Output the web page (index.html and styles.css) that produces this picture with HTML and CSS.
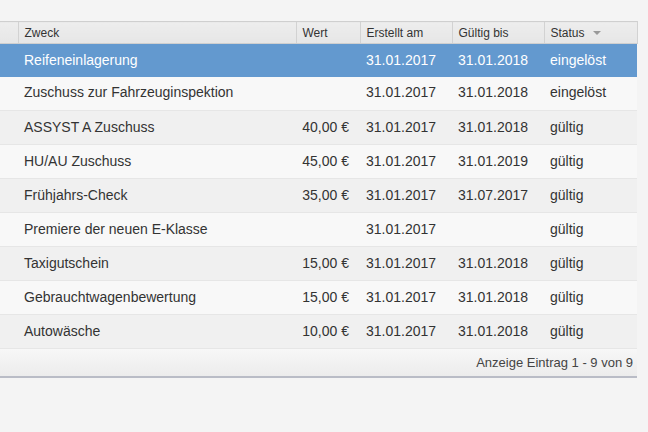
FILE: index.html
```html
<!DOCTYPE html>
<html lang="de">
<head>
<meta charset="utf-8">
<link rel="stylesheet" href="styles.css">
</head>
<body>
<div class="grid">
  <table class="tbl">
    <colgroup>
      <col class="c0"><col class="c1"><col class="c2"><col class="c3"><col class="c4"><col class="c5">
    </colgroup>
    <thead>
      <tr>
        <th></th>
        <th>Zweck</th>
        <th>Wert</th>
        <th>Erstellt am</th>
        <th>Gültig bis</th>
        <th>Status <span class="sort"></span></th>
      </tr>
    </thead>
    <tbody>
      <tr class="sel"><td></td><td>Reifeneinlagerung</td><td class="num"></td><td>31.01.2017</td><td>31.01.2018</td><td>eingelöst</td></tr>
      <tr><td></td><td>Zuschuss zur Fahrzeuginspektion</td><td class="num"></td><td>31.01.2017</td><td>31.01.2018</td><td>eingelöst</td></tr>
      <tr><td></td><td>ASSYST A Zuschuss</td><td class="num">40,00 €</td><td>31.01.2017</td><td>31.01.2018</td><td>gültig</td></tr>
      <tr><td></td><td>HU/AU Zuschuss</td><td class="num">45,00 €</td><td>31.01.2017</td><td>31.01.2019</td><td>gültig</td></tr>
      <tr><td></td><td>Frühjahrs-Check</td><td class="num">35,00 €</td><td>31.01.2017</td><td>31.07.2017</td><td>gültig</td></tr>
      <tr><td></td><td>Premiere der neuen E-Klasse</td><td class="num"></td><td>31.01.2017</td><td></td><td>gültig</td></tr>
      <tr><td></td><td>Taxigutschein</td><td class="num">15,00 €</td><td>31.01.2017</td><td>31.01.2018</td><td>gültig</td></tr>
      <tr><td></td><td>Gebrauchtwagenbewertung</td><td class="num">15,00 €</td><td>31.01.2017</td><td>31.01.2018</td><td>gültig</td></tr>
      <tr><td></td><td>Autowäsche</td><td class="num">10,00 €</td><td>31.01.2017</td><td>31.01.2018</td><td>gültig</td></tr>
    </tbody>
  </table>
  <div class="footer">Anzeige Eintrag 1 - 9 von 9</div>
</div>
</body>
</html>
```
FILE: styles.css
```css
html, body {
  margin: 0;
  padding: 0;
  background: #f4f4f4;
}
body {
  font-family: "Liberation Sans", Arial, sans-serif;
  color: #333;
}
.grid {
  width: 637px;
  margin-top: 21px;
}
.tbl {
  width: 637px;
  border-collapse: collapse;
  table-layout: fixed;
}
.c0 { width: 18px; }
.c1 { width: 278px; }
.c2 { width: 64px; }
.c3 { width: 92px; }
.c4 { width: 92px; }
.c5 { width: 93px; }
.tbl th {
  height: 22px;
  padding: 0 6px;
  font-size: 12px;
  font-weight: normal;
  text-align: left;
  color: #333;
  background: linear-gradient(#ededed, #e6e6e6);
  border-top: 1px solid #cfcfcf;
  border-bottom: 1px solid #cfcfcf;
  border-left: 1px solid #d2d2d2;
  box-sizing: border-box;
}
.tbl th:first-child { border-left: none; }
.tbl th:last-child { border-right: 1px solid #d2d2d2; }
.sort {
  display: inline-block;
  width: 0;
  height: 0;
  margin-left: 5px;
  vertical-align: middle;
  border-left: 4px solid transparent;
  border-right: 4px solid transparent;
  border-top: 4px solid #999;
}
.tbl td {
  height: 34px;
  padding: 0 6px 2px 6px;
  box-sizing: border-box;
  font-size: 14px;
  border-bottom: 1px solid #e6e6e6;
  background: #f8f8f8;
  white-space: nowrap;
  overflow: hidden;
}
.tbl tbody tr:nth-child(odd) td { background: #f0f0f0; }
.tbl tbody tr.sel td {
  height: 33px;
  padding-bottom: 0;
  background: #6399cf;
  color: #fff;
  border-bottom: none;
}
.tbl td.num {
  text-align: right;
  padding-right: 11px;
}
.footer {
  height: 27px;
  line-height: 28px;
  text-align: right;
  padding-right: 4px;
  font-size: 13px;
  color: #444;
  background: linear-gradient(#f7f7f7, #ececec);
  border-bottom: 2px solid #b9bcc6;
}
```
